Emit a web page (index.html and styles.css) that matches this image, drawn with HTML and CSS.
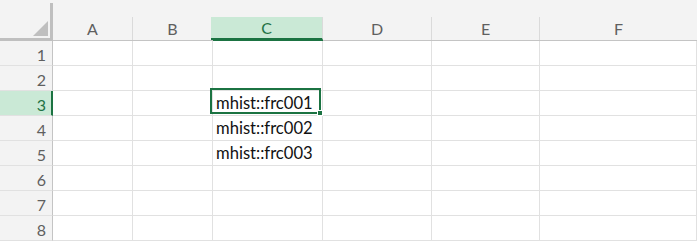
FILE: index.html
```html
<!DOCTYPE html>
<html lang="en">
<head>
    <meta charset="UTF-8">
    <meta name="viewport" content="width=device-width, initial-scale=1.0">
    <title>Sheet</title>
    <link rel="stylesheet" href="styles.css">
</head>
<body>
    <div class="sheet">
        <div class="head corner"><div class="corner-box"><span class="tri"></span></div></div>
        <div class="head col"><span>A</span></div>
        <div class="head col"><span>B</span></div>
        <div class="head col active"><span>C</span></div>
        <div class="head col"><span>D</span></div>
        <div class="head col"><span>E</span></div>
        <div class="head col last"><span>F</span></div>

        <div class="rh">1</div><div class="cell"></div><div class="cell"></div><div class="cell"></div><div class="cell"></div><div class="cell"></div><div class="cell"></div>
        <div class="rh">2</div><div class="cell"></div><div class="cell"></div><div class="cell"></div><div class="cell"></div><div class="cell"></div><div class="cell"></div>
        <div class="rh active">3</div><div class="cell"></div><div class="cell"></div><div class="cell selected">mhist::frc001<span class="sel"><span class="handle"></span></span></div><div class="cell"></div><div class="cell"></div><div class="cell"></div>
        <div class="rh">4</div><div class="cell"></div><div class="cell"></div><div class="cell">mhist::frc002</div><div class="cell"></div><div class="cell"></div><div class="cell"></div>
        <div class="rh">5</div><div class="cell"></div><div class="cell"></div><div class="cell">mhist::frc003</div><div class="cell"></div><div class="cell"></div><div class="cell"></div>
        <div class="rh">6</div><div class="cell"></div><div class="cell"></div><div class="cell"></div><div class="cell"></div><div class="cell"></div><div class="cell"></div>
        <div class="rh">7</div><div class="cell"></div><div class="cell"></div><div class="cell"></div><div class="cell"></div><div class="cell"></div><div class="cell"></div>
        <div class="rh">8</div><div class="cell"></div><div class="cell"></div><div class="cell"></div><div class="cell"></div><div class="cell"></div><div class="cell"></div>
    </div>
</body>
</html>
```

FILE: styles.css
```css
* { box-sizing: border-box; }
body { margin: 0; background: #ffffff; font-family: Lato, "Noto Sans", sans-serif; overflow: hidden; }
.sheet { display: grid; grid-template-columns: 53px 80px 80px 110px 109px 108px 1fr; grid-template-rows: 41px repeat(8, 25px); width: 697px; }
.head { background: #f3f3f3; border-bottom: 1px solid #c4c4c4; }
.corner { padding-top: 3px; border-bottom: none; }
.corner-box { position: relative; height: 100%; border-right: 3px solid #bfbfbf; border-bottom: 3px solid #bfbfbf; }
.tri { position: absolute; right: 2px; bottom: 2px; width: 0; height: 0; border-left: 15px solid transparent; border-bottom: 15px solid #bfbfbf; }
.col { padding-top: 17px; }
.col span { display: block; height: 23px; line-height: 23px; text-align: center; font-size: 16px; color: #5f5f5f; border-right: 1px solid #dadada; }
.col.last span { border-right: none; }
.col.active span { background: #cae9d6; color: #1f7244; border-bottom: 2px solid #1b7342; height: 23px; line-height: 22px; margin-left: -2px; }
.col.active { border-bottom-color: #1b7342; }
.rh { background: #f3f3f3; border-right: 1px solid #c4c4c4; border-bottom: 1px solid #e1e1e1; text-align: right; padding: 2px 6px 0 0; font-size: 16px; line-height: 23px; color: #5f5f5f; }
.rh.active { background: #cae9d6; color: #1f7244; border-right: 2px solid #1b7342; padding-right: 5px; }
.cell { position: relative; border-right: 1px solid #e1e1e1; border-bottom: 1px solid #e1e1e1; font-size: 16.6px; line-height: 23px; padding: 1px 0 0 3px; color: #111111; white-space: nowrap; }
.sel { position: absolute; left: -3px; top: -3px; right: 1px; bottom: 1px; border: 2px solid #1b7342; }
.handle { position: absolute; right: -4px; bottom: -4px; width: 6px; height: 6px; background: #1b7342; border: 1px solid #ffffff; }
```
